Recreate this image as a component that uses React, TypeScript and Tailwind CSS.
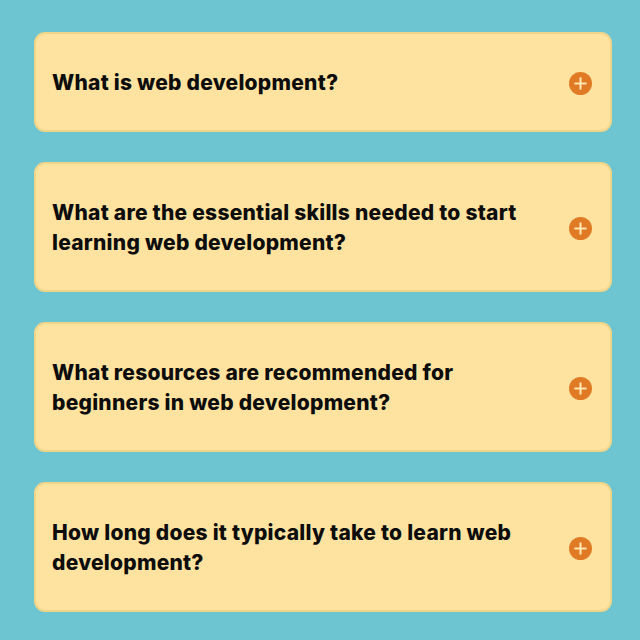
import React from "react";

const items = [
  "What is web development?",
  "What are the essential skills needed to start learning web development?",
  "What resources are recommended for beginners in web development?",
  "How long does it typically take to learn web development?",
];

function PlusIcon() {
  return (
    <svg width="23" height="23" viewBox="0 0 24 24" className="shrink-0">
      <circle cx="12" cy="12" r="12" fill="#e17a25" />
      <path d="M12 6.5v11M6.5 12h11" stroke="#fde8b0" strokeWidth="2.2" strokeLinecap="round" />
    </svg>
  );
}

export default function App() {
  return (
    <div className="w-[640px] h-[640px] bg-[#6cc5d1] pt-[32px] pl-[34px] pr-[28px] overflow-hidden">
      <div className="flex flex-col gap-[30px]">
        {items.map((q) => (
          <div
            key={q}
            className="flex items-center gap-[36px] rounded-[11px] bg-[#fde39f] border-2 border-[#eed58a] pl-[16px] pr-[18px] pt-[34px] pb-[32px]"
          >
            <div
              className="flex-1 text-[21px] leading-[30px] font-extrabold text-[#0d0d0d] tracking-[0.25px]"
              style={{ fontFamily: "Inter, 'Noto Sans', sans-serif" }}
            >
              {q}
            </div>
            <PlusIcon />
          </div>
        ))}
      </div>
    </div>
  );
}
